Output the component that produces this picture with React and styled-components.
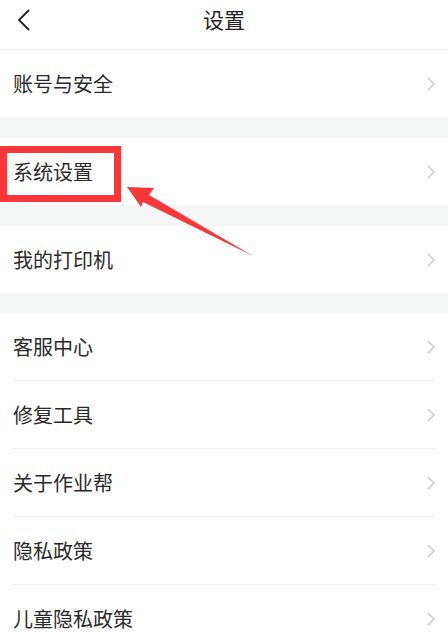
import React from "react";
import styled, { createGlobalStyle } from "styled-components";

const Global = createGlobalStyle`
  html, body { margin: 0; padding: 0; background: #fff; }
  body { font-family: "Noto Sans CJK SC", "Noto Sans", sans-serif; }
`;

const Page = styled.div`
  position: relative;
  width: 448px;
  height: 632px;
  overflow: hidden;
  background: #f4f7f6;
`;

const Header = styled.header`
  height: 49px;
  display: flex;
  align-items: center;
  justify-content: center;
  position: relative;
  background: #fff;
  border-bottom: 1px solid #efefef;
`;

const BackBtn = styled.button`
  position: absolute;
  left: 12px;
  top: 6px;
  width: 24px;
  height: 28px;
  border: 0;
  padding: 0;
  background: none;
  display: flex;
  align-items: center;
  justify-content: center;
`;

const Title = styled.h1`
  margin: 0 0 10px;
  font-size: 21px;
  font-weight: 400;
  color: #222;
  line-height: 1;
`;

const Section = styled.section`
  background: #fff;
  margin-bottom: ${(p) => p.$gap}px;
`;

const Row = styled.div`
  height: 67px;
  margin: 0 13px;
  display: flex;
  align-items: center;
  justify-content: space-between;
  border-top: ${(p) => (p.$divider ? "1px solid #f0f0f0" : "none")};
`;

const Label = styled.span`
  font-size: 20px;
  color: #2a2a2a;
  line-height: 1;
  margin-top: ${(p) => p.$shift || 0}px;
`;

const Highlight = styled.div`
  position: absolute;
  left: 0;
  top: 146px;
  width: 121px;
  height: 56px;
  box-sizing: border-box;
  border: 7px solid #f7373a;
`;

const ArrowSvg = styled.svg`
  position: absolute;
  left: 0;
  top: 0;
  pointer-events: none;
`;

const Chevron = () => (
  <svg width="8" height="14" viewBox="0 0 8 14">
    <polyline points="1,1 7,7 1,13" fill="none" stroke="#c6c6c6" strokeWidth="1.3" />
  </svg>
);

const Item = ({ label, divider }) => (
  <Row $divider={divider}>
    <Label>{label}</Label>
    <Chevron />
  </Row>
);

export default function App() {
  return (
    <>
      <Global />
      <Page>
        <Header>
          <BackBtn aria-label="back">
            <svg width="14" height="24" viewBox="0 0 14 24">
              <polyline points="12,2 2,12 12,22" fill="none" stroke="#1e1e1e" strokeWidth="1.8" />
            </svg>
          </BackBtn>
          <Title>设置</Title>
        </Header>
        <Section $gap={21}>
          <Item label="账号与安全" />
        </Section>
        <Section $gap={21}>
          <Item label="系统设置" />
        </Section>
        <Section $gap={20}>
          <Item label="我的打印机" />
        </Section>
        <Section $gap={0}>
          <Item label="客服中心" />
          <Item label="修复工具" divider />
          <Item label="关于作业帮" divider />
          <Item label="隐私政策" divider />
          <Item label="儿童隐私政策" divider />
        </Section>
        <Highlight />
        <ArrowSvg width="448" height="632" viewBox="0 0 448 632">
          <polygon
            points="127,187 154,188 149,195 253,256 143,202 141,207"
            fill="#f7373a"
          />
        </ArrowSvg>
      </Page>
    </>
  );
}
